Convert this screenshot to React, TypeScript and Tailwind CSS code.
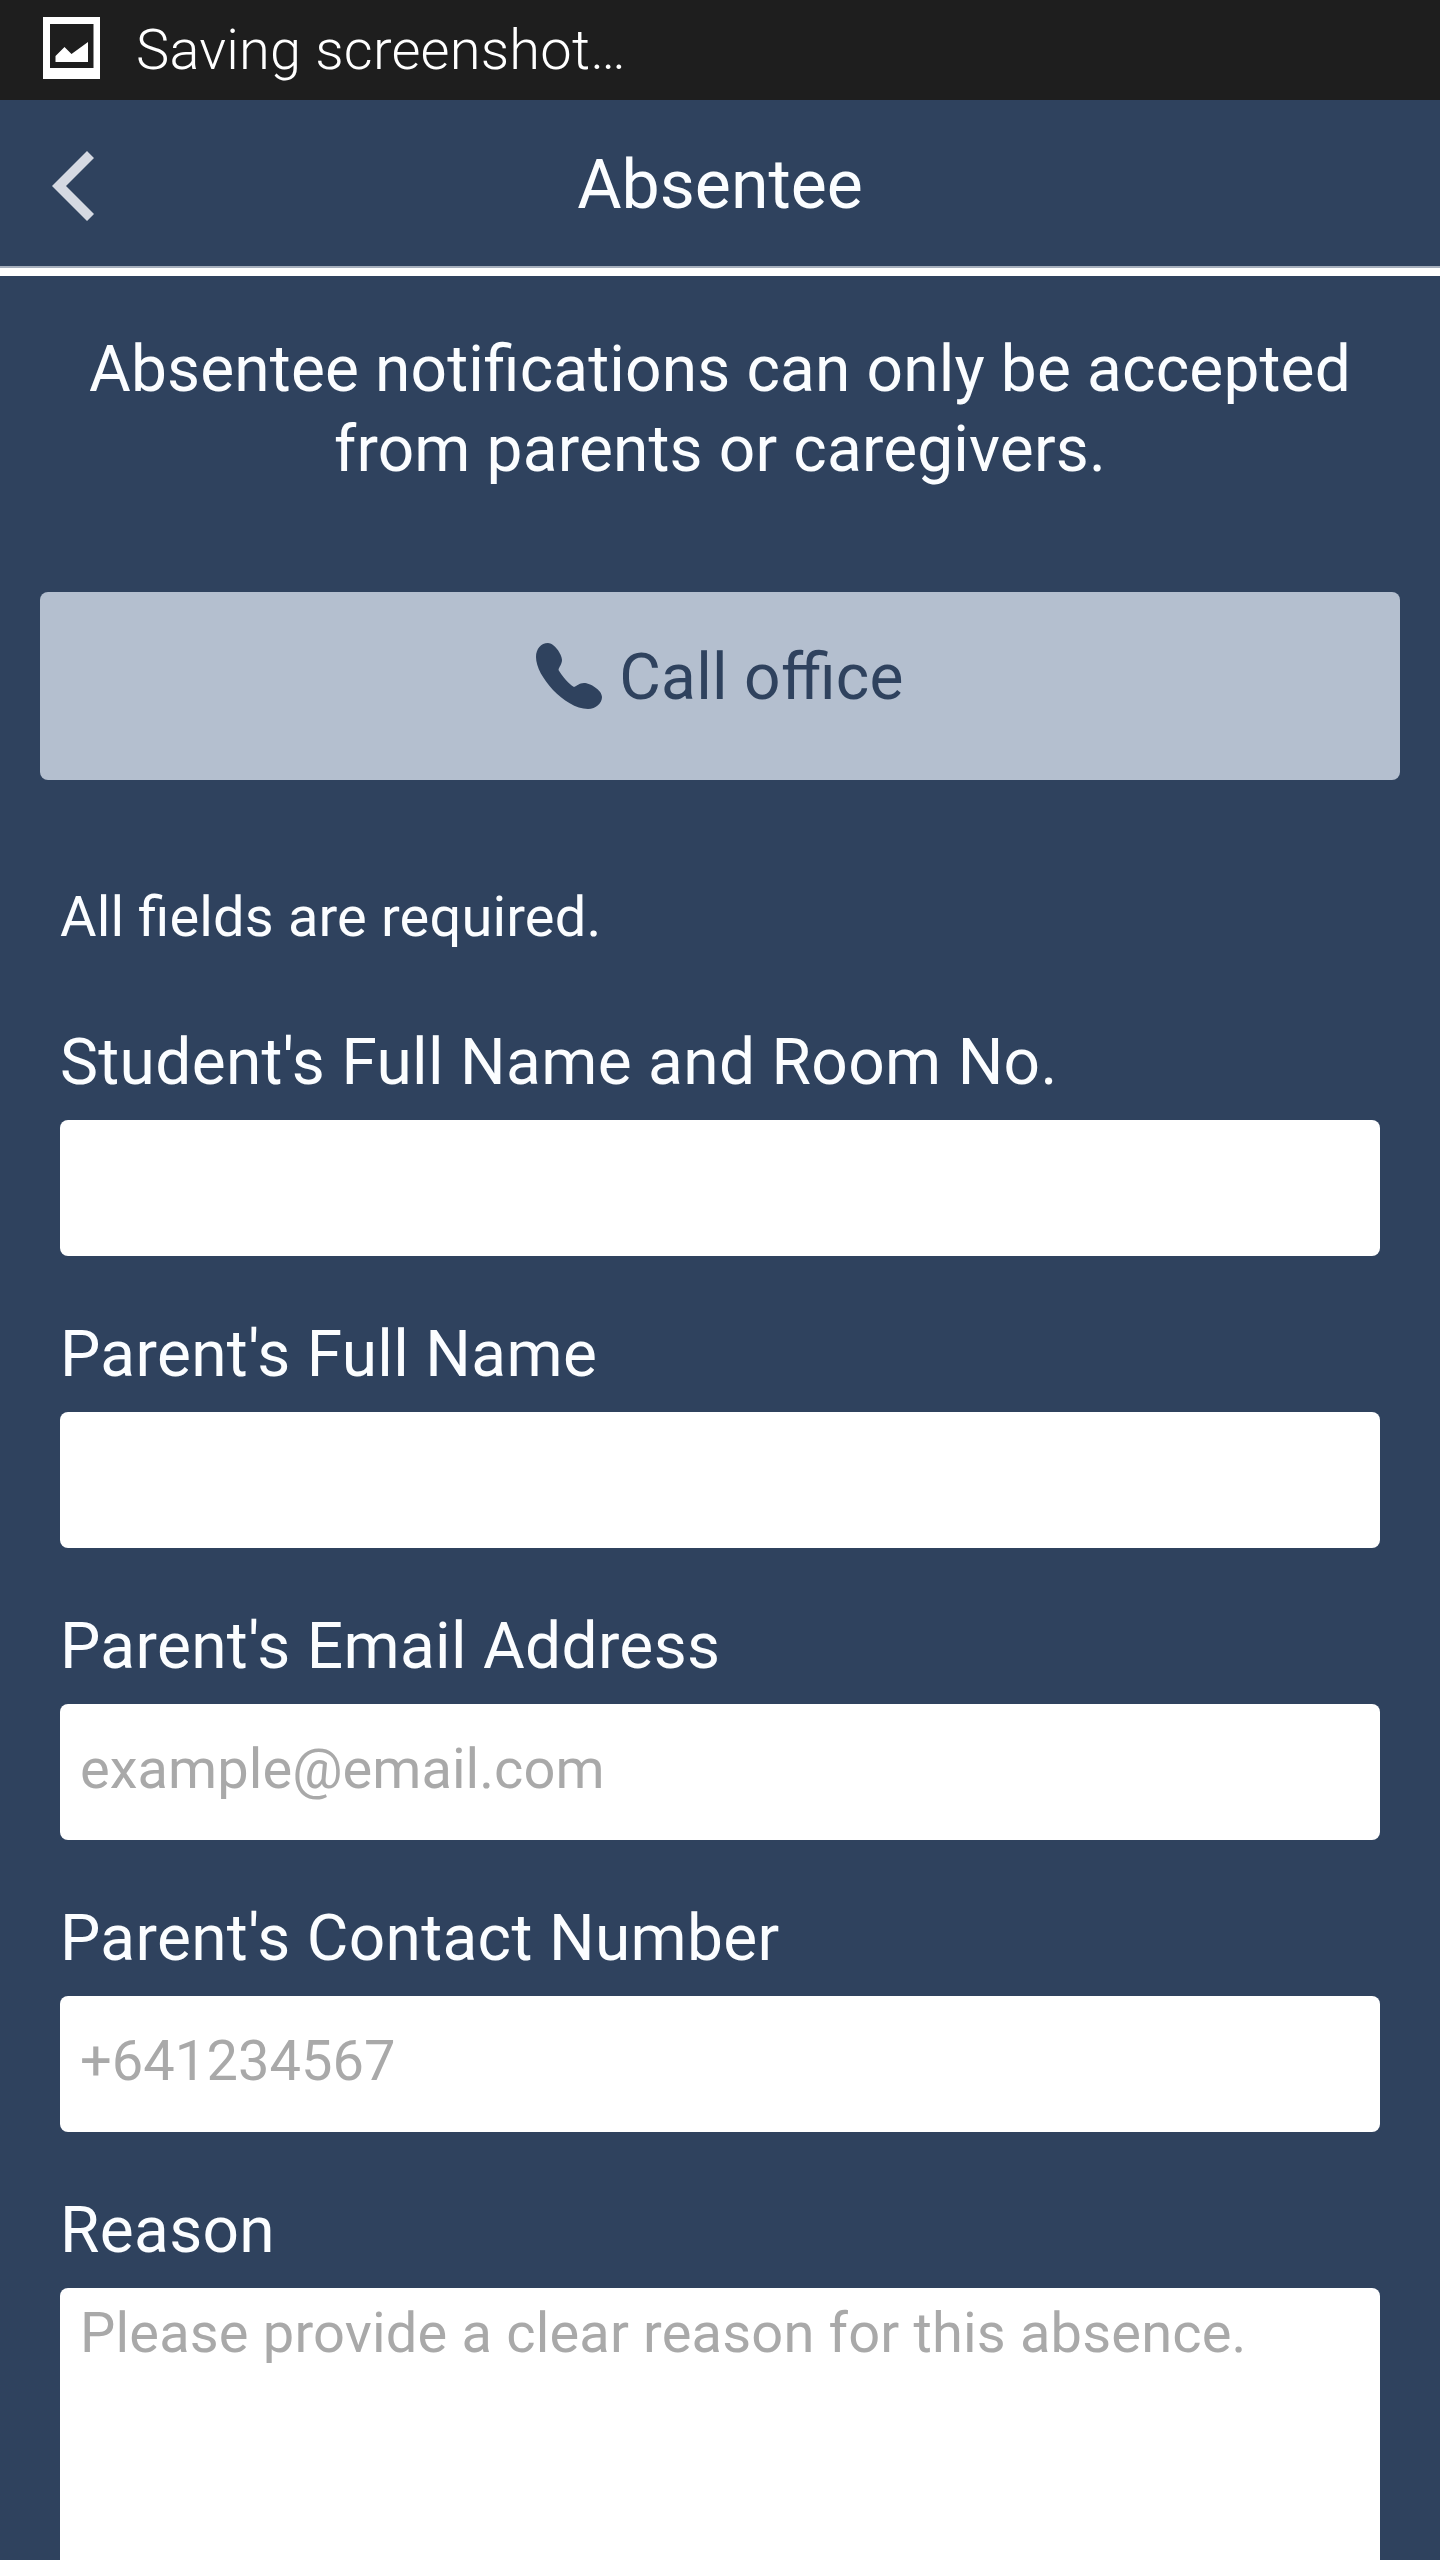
import type { ReactNode } from "react";

function StatusBar() {
  return (
    <div className="flex h-[100px] shrink-0 items-center bg-[#1e1e1e] pl-[43px]">
      <svg className="mt-[-4px] h-[62px] w-[57px]" viewBox="0 0 57 62">
        <path fill="#fff" fillRule="evenodd" d="M0 0h57v62H0zM7 7v44h43.5V7z" />
        <path fill="#fff" d="M12.5 45v-6l9-9 7 7L45 25v20z" />
      </svg>
      <span className="ml-[36px] text-[56px] leading-[80px] font-light tracking-[0.2px] whitespace-nowrap text-white">
        Saving screenshot…
      </span>
    </div>
  );
}

function Header({ title }: { title: string }) {
  return (
    <header className="shrink-0 border-b-8 border-white">
      <div className="grid h-[168px] grid-cols-[1fr_auto_1fr] items-start border-b-2 border-[#a6afbd]">
        <div className="pt-[51px] pl-[52px]">
          <svg className="h-[70px] w-[42px]" viewBox="0 0 42 70" fill="#d5d9e2">
            <path d="M35 0 0 35l35 35 7-7-28-28L42 7z" />
          </svg>
        </div>
        <h1 className="pt-[45px] text-[68px] leading-[80px] whitespace-nowrap">{title}</h1>
      </div>
    </header>
  );
}

function CallButton() {
  return (
    <button className="mx-10 mt-[102px] flex h-[188px] shrink-0 items-start justify-center rounded-lg bg-[#b4bfcf] pt-[46px] text-[#2f425e]">
      <svg className="mt-[5px] mr-[17px] h-[66px] w-[66px]" viewBox="0 0 66 66" fill="currentColor">
        <path d="M12 0C5 0 0 6 0 14c0 10 7 22 17 33 10 10 23 19 35 19 8 0 14-6 14-12 0-7-12-14-18-14-5 0-7 3-10 4-5-3-12-11-15.500-17 .5-3 3.500-6 3.500-10C26 11 18 0 12 0z" />
      </svg>
      <span className="text-[64px] leading-[80px] tracking-[0.3px] whitespace-nowrap">Call office</span>
    </button>
  );
}

function Field({ label, children }: { label: string; children: ReactNode }) {
  return (
    <div>
      <div className="pt-px text-[64px] leading-[80px] tracking-[0.33px] whitespace-nowrap">{label}</div>
      {children}
    </div>
  );
}

function TextBox({ placeholder }: { placeholder?: string }) {
  return (
    <div className="mt-[17px] h-[136px] rounded-lg bg-white px-5 pt-[25px] text-[56px] leading-[80px] tracking-[0.05px] text-[#a9a9a9]">
      {placeholder}
    </div>
  );
}

const FIELDS = [
  { label: "Student's Full Name and Room No." },
  { label: "Parent's Full Name" },
  { label: "Parent's Email Address", placeholder: "example@email.com" },
  { label: "Parent's Contact Number", placeholder: "+641234567" },
];

export default function App() {
  return (
    <div className="flex h-[2560px] w-[1440px] flex-col overflow-hidden bg-[#2f425e] font-['Roboto',sans-serif] text-[#fbfdff] [font-feature-settings:'liga'_1]">
      <StatusBar />
      <Header title="Absentee" />
      <p className="mt-[54px] shrink-0 text-center text-[64px] leading-[80px] tracking-[0.15px] whitespace-nowrap">
        Absentee notifications can only be accepted
        <br />
        from parents or caregivers.
      </p>
      <CallButton />
      <div className="mx-[60px] mt-[97px] flex shrink-0 flex-col">
        <p className="text-[56px] leading-[80px] tracking-[0.15px] whitespace-nowrap">All fields are required.</p>
        <div className="mt-[65px] flex flex-col gap-[58px]">
          {FIELDS.map((f) => (
            <Field key={f.label} label={f.label}>
              <TextBox placeholder={f.placeholder} />
            </Field>
          ))}
          <Field label="Reason">
            <div className="mt-[17px] h-[300px] rounded-t-lg bg-white px-5 pt-[5px] text-[56px] leading-[80px] tracking-[0.17px] whitespace-nowrap text-[#a9a9a9]">
              Please provide a clear reason for this absence.
            </div>
          </Field>
        </div>
      </div>
    </div>
  );
}
